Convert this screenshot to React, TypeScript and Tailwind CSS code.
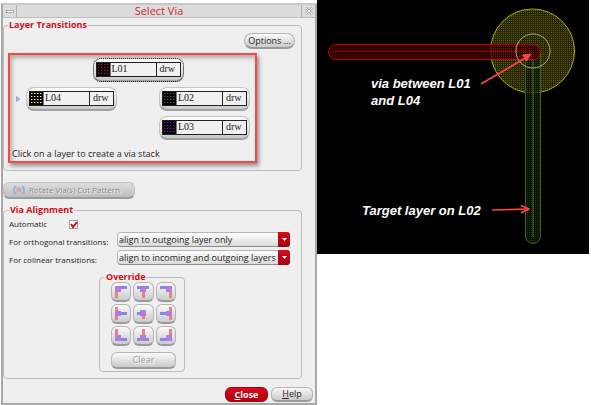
import { useState, type ReactNode } from "react";

function Swatch({ id, color }: { id: string; color: string }) {
  return (
    <svg viewBox="0 0 13 13" className="h-[13px] w-[13px] shrink-0" shapeRendering="crispEdges" aria-hidden="true">
      <defs>
        <pattern id={id} width="3" height="3" patternUnits="userSpaceOnUse">
          <rect x="1" y="1" width="1" height="1" fill={color} />
          <rect x="2" y="1" width="1" height="1" fill={color} fillOpacity="0.4" />
        </pattern>
      </defs>
      <rect width="13" height="13" fill="#060406" />
      <rect width="13" height="13" fill={`url(#${id})`} />
    </svg>
  );
}

function LayerButton({ name, color, focused = false }: { name: string; color: string; focused?: boolean }) {
  return (
    <button
      type="button"
      className={
        "flex h-6 w-[91px] items-center rounded-lg border border-[#c4c4c4] border-b-2 border-b-[#a2a2a2] bg-linear-to-b from-white to-[#c9c9c9] px-[2px] " +
        (focused ? "outline-1 -outline-offset-1 outline-dotted outline-[#222222]" : "")
      }
    >
      <span className="flex h-[15px] w-full items-center border border-[#222222] bg-[#f1f1f1] font-['Liberation_Serif',serif] text-[10px] leading-3 text-[#222222]">
        <Swatch id={`swatch-${name}`} color={color} />
        <span className="h-full flex-1 border-l border-[#777777] pl-px text-left">{name}</span>
        <span className="h-full w-6 border-l border-[#222222] pl-[3px] text-left">drw</span>
      </span>
    </button>
  );
}

function Group({ title, className, children }: { title: string; className: string; children: ReactNode }) {
  return (
    <fieldset className={"min-w-0 rounded-[4px] border border-[#bcbcbc] " + className}>
      <legend className="px-px text-[9px] leading-[10px] font-bold text-[#d00c18]">{title}</legend>
      {children}
    </fieldset>
  );
}

function Choice({ id, label, options }: { id: string; label: string; options: string[] }) {
  return (
    <div className="flex items-center">
      <label htmlFor={id} className="w-[108px] shrink-0 pt-1 whitespace-nowrap">
        {label}
      </label>
      <div className="relative w-[173px]">
        <select
          id={id}
          className="block h-[15px] w-full appearance-none rounded-[4px] border border-[#b5b5b5] border-b-[#8c8c8c] bg-linear-to-b from-white to-[#dadada] pr-3 pl-px text-[9px] leading-3 text-[#222222]"
        >
          {options.map((o) => (
            <option key={o}>{o}</option>
          ))}
        </select>
        <span className="pointer-events-none absolute inset-y-0 right-0 flex w-3 items-center justify-center rounded-r-[3px] bg-linear-to-b from-[#d40b1b] to-[#a60010]">
          <svg viewBox="0 0 5 3" className="h-[3px] w-[5px]" aria-hidden="true">
            <path d="M0 0h5L2.500 3z" fill="#fff" />
          </svg>
        </span>
      </div>
    </div>
  );
}

type Cell = { label: string; blue: string; red: string; node: string };

const CELLS: Cell[] = [
  { label: "Top left", blue: "M6 1h6v3H6z", red: "M0 7h3v6H0z", node: "M0 1h6v6H0z" },
  { label: "Top", blue: "M0 1h12v3H0z", red: "M5 7h3v6H5z", node: "M3 1h6v6H3z" },
  { label: "Top right", blue: "M0 1h6v3H0z", red: "M9 7h3v6H9z", node: "M6 1h6v6H6z" },
  { label: "Left", blue: "M6 5h6v3H6z", red: "M0 0h3v13H0z", node: "M0 4h6v5H0z" },
  { label: "Centre", blue: "M0 5h6v3H0z", red: "M5 7h3v5H5z", node: "M3 3h6v6H3z" },
  { label: "Right", blue: "M0 5h6v3H0z", red: "M9 0h3v13H9z", node: "M6 4h6v5H6z" },
  { label: "Bottom left", blue: "M6 9h6v3H6z", red: "M0 0h3v6H0z", node: "M0 6h6v6H0z" },
  { label: "Bottom", blue: "M0 9h12v3H0z", red: "M5 0h3v6H5z", node: "M3 6h6v6H3z" },
  { label: "Bottom right", blue: "M0 9h6v3H0z", red: "M9 0h3v6H9z", node: "M6 6h6v6H6z" },
];

function LayoutCanvas() {
  return (
    <svg viewBox="0 0 272 254" className="block h-auto w-full bg-black" role="img" aria-label="Layout canvas">
      <defs>
        <pattern id="yellow-fill" width="2" height="2" patternUnits="userSpaceOnUse">
          <rect width="2" height="2" fill="#242400" />
          <rect width="1" height="1" fill="#606000" />
        </pattern>
        <pattern id="red-fill" width="2" height="2" patternUnits="userSpaceOnUse">
          <rect width="2" height="2" fill="#2c0000" />
          <rect width="1" height="1" fill="#700000" />
        </pattern>
        <pattern id="green-fill" width="2" height="2" patternUnits="userSpaceOnUse">
          <rect width="2" height="2" fill="#0b1406" />
          <rect width="1" height="1" fill="#263f19" />
        </pattern>
      </defs>
      <circle cx="215.500" cy="51" r="42" fill="url(#yellow-fill)" stroke="#b0b000" />
      <rect x="208.500" y="44.500" width="15" height="199" rx="7.500" fill="url(#green-fill)" fillOpacity="0.8" stroke="#3f6128" />
      <path d="M216 52v185" stroke="#4c6e34" />
      <rect x="11.500" y="44.500" width="212" height="15" rx="7.500" fill="url(#red-fill)" fillOpacity="0.8" stroke="#c00000" />
      <path d="M16 51.500h200" stroke="#8e0000" />
      <circle cx="216" cy="51" r="17" fill="none" stroke="#a8a8a0" />
      <g stroke="#ff4444" strokeWidth="1.700" strokeLinejoin="round" fill="#ff4444">
        <path d="M164 84L210 57" />
        <path d="M214 54l-8.500 1l4 6z" strokeWidth="1" />
        <path d="M175 210l36-1" />
        <path d="M204 205.500l8 3.500l-8 4" fill="none" />
      </g>
      <g fill="#fff" className="font-['Liberation_Sans',Arial,sans-serif] text-[13px] font-bold italic">
        <text x="54" y="88">via between L01</text>
        <text x="54" y="105">and L04</text>
        <text x="45" y="215">Target layer on L02</text>
      </g>
    </svg>
  );
}

export default function App() {
  const [automatic, setAutomatic] = useState(true);
  const raised = "border border-[#b4b4b4] border-b-2 border-b-[#9a9a9a] bg-linear-to-b from-[#fafafa] to-[#cbcbcb] text-[9px] leading-3";

  return (
    <main className="flex items-start bg-white pr-[2px] font-['Open_Sans','Noto_Sans',sans-serif] text-[8px] leading-[10px] text-[#222222]">
      <section className="mt-[3px] ml-px flex w-[316px] shrink-0 flex-col border-2 border-[#a8a8a8] border-t-[#c8c8c8] bg-[#efefef] pb-px" aria-label="Select Via">
        <header className="flex h-[13px] items-stretch border-b border-[#bdbdbd] bg-[#dcdcdc]">
          <button type="button" aria-label="Window menu" className="flex w-[14px] items-center justify-center border-r border-[#b0b0b0]">
            <span className="h-[3px] w-2 border border-[#a8a8a8] bg-white" />
          </button>
          <h1 className="flex-1 text-center text-[11px] leading-3 font-medium text-[#cf1f2c]">Select Via</h1>
          <button type="button" aria-label="Close window" className="flex w-[14px] items-center justify-center border-l border-[#b0b0b0]">
            <svg viewBox="0 0 8 8" className="h-2 w-2" aria-hidden="true">
              <path d="M1 1l6 6M7 1l-6 6" stroke="#aaa" strokeWidth="2.500" />
              <path d="M1 1l6 6M7 1l-6 6" stroke="#fff" strokeWidth="1" />
            </svg>
          </button>
        </header>

        <div className="mt-[2px] mr-[13px]">
          <Group title="Layer Transitions" className="px-1 pb-[7px]">
            <div className="flex justify-end pt-[3px] pr-[2px]">
              <button type="button" className={"h-4 w-[51px] rounded-lg " + raised}>
                Options ...
              </button>
            </div>
            <div className="mt-1 mr-10 border-2 border-[#ff4444] pt-[3px] pb-[2px] shadow-[2px_3px_4px_#00000066,inset_2px_3px_4px_#00000044]">
              <div className="flex">
                <div className="flex w-4 shrink-0 items-center justify-center">
                  <svg viewBox="0 0 4 6" className="h-[6px] w-1" aria-hidden="true">
                    <path d="M0 0l4 3l-4 3z" fill="#a9b4d8" stroke="#8292bd" strokeWidth="0.500" />
                  </svg>
                </div>
                <div className="mr-[5px] flex min-w-0 flex-1 flex-col gap-[5px]">
                  <div className="flex justify-center">
                    <LayerButton name="L01" color="#b01818" focused />
                  </div>
                  <div className="flex justify-between">
                    <LayerButton name="L04" color="#ffff50" />
                    <LayerButton name="L02" color="#3f6a35" />
                  </div>
                  <div className="flex justify-end">
                    <LayerButton name="L03" color="#6a1fb0" />
                  </div>
                </div>
              </div>
              <p className="mt-[9px] pl-[2px] text-[9px]">Click on a layer to create a via stack</p>
            </div>
          </Group>

          <button
            type="button"
            disabled
            className="mt-[11px] flex h-[17px] w-[132px] items-center gap-1 rounded-md border border-[#c0c0c0] border-b-2 border-b-[#9c9c9c] bg-linear-to-b from-[#dedede] to-[#bdbdbd] pl-[9px] text-[8px] leading-3 text-[#8c8c8c] [text-shadow:1px_1px_0_#eeeeee]"
          >
            <svg viewBox="0 0 12 10" className="h-[10px] w-3" fill="none" aria-hidden="true">
              <path d="M3 1C0 3 0 7 3 9M9 1c3 2 3 6 0 8" stroke="#9aaedb" strokeWidth="2" />
              <circle cx="6" cy="5" r="2.500" fill="#dba0a0" stroke="#b7bfe0" />
            </svg>
            Rotate Via(s) Cut Pattern
          </button>

          <Group title="Via Alignment" className="mt-[6px] px-[5px] pb-[6px]">
            <div className="mt-1 flex h-[10px] items-center">
              <label htmlFor="automatic" className="w-[60px]">
                Automatic
              </label>
              <span className="relative flex h-[9px] w-[9px]">
                <input
                  id="automatic"
                  type="checkbox"
                  checked={automatic}
                  onChange={(e) => setAutomatic(e.target.checked)}
                  className="peer h-[9px] w-[9px] appearance-none border border-[#a0a0a0] bg-white"
                />
                <svg viewBox="0 0 9 9" className="pointer-events-none absolute inset-0 hidden peer-checked:block" aria-hidden="true">
                  <path d="M2 4l2 3l4-5" stroke="#cc0a18" strokeWidth="2" fill="none" />
                </svg>
              </span>
            </div>
            <div className="mt-[3px] flex flex-col gap-[3px]">
              <Choice id="orthogonal" label="For orthogonal transitions:" options={["align to outgoing layer only", "align to incoming layer only"]} />
              <Choice id="colinear" label="For colinear transitions:" options={["align to incoming and outgoing layers", "align to outgoing layer only"]} />
            </div>
            <Group title="Override" className="mt-[7px] ml-[90px] w-[86px] px-[5px] pb-[2px]">
              <div className="ml-[6px] w-[65px]">
                <div className="grid grid-cols-3 gap-x-[2px] gap-y-[2px]">
                  {CELLS.map((c) => (
                    <button key={c.label} type="button" aria-label={c.label} className={"flex h-5 items-center justify-center rounded-md " + raised}>
                      <svg viewBox="0 0 12 13" className="h-[13px] w-3" shapeRendering="crispEdges" aria-hidden="true">
                        <path d={c.blue} fill="#8587e6" />
                        <path d={c.red} fill="#ea8280" />
                        <path d={c.node} fill="#b17be2" />
                      </svg>
                    </button>
                  ))}
                </div>
                <button type="button" className={"mt-[6px] block h-[17px] w-full rounded-md text-[#9a9a9a] [text-shadow:1px_1px_0_#ffffff] " + raised}>
                  Clear
                </button>
              </div>
            </Group>
          </Group>
        </div>

        <footer className="mt-2 flex justify-end gap-[3px] pr-[2px]">
          <button type="button" className="h-[15px] w-[43px] rounded-md border border-[#a80012] bg-linear-to-b from-[#d80b1c] to-[#b00010] text-[9px] leading-3 font-bold text-white">
            <span className="underline">C</span>lose
          </button>
          <button type="button" className={"h-[15px] w-[42px] rounded-md " + raised}>
            <span className="underline">H</span>elp
          </button>
        </footer>
      </section>
      <div className="min-w-0 flex-1">
        <LayoutCanvas />
      </div>
    </main>
  );
}
